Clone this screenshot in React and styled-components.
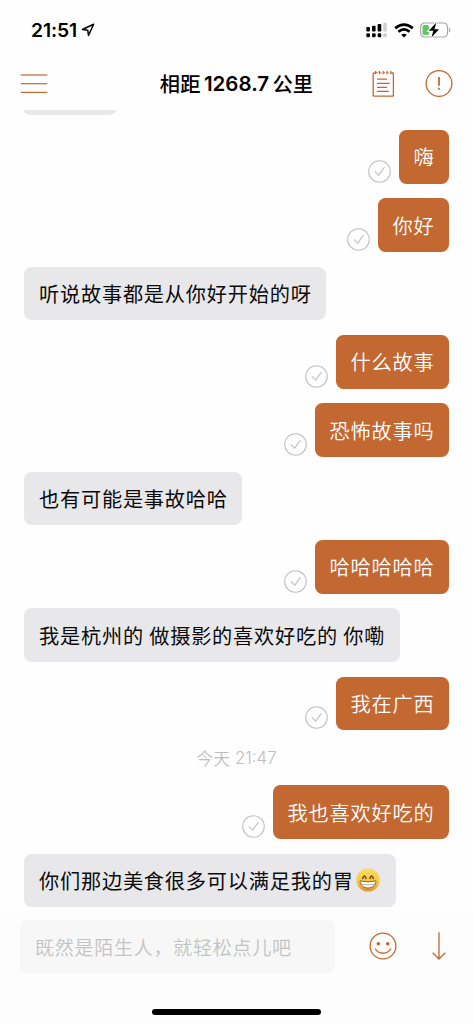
import styled, { createGlobalStyle, css } from "styled-components";

const ACCENT = "#c26830";

const GlobalStyle = createGlobalStyle`
  * {
    box-sizing: border-box;
  }
  body {
    margin: 0;
    background: #fefefe;
    font-family: Inter, "Noto Sans CJK SC", sans-serif;
  }
`;

const Screen = styled.div`
  width: 473px;
  height: 1024px;
  display: flex;
  flex-direction: column;
  overflow: hidden;
  background: #fefefe;
`;

const StatusBar = styled.div`
  height: 60px;
  flex: none;
  display: flex;
  align-items: center;
  justify-content: space-between;
  padding: 0 22px 0 31px;
`;

const Clock = styled.div`
  display: flex;
  align-items: center;
  gap: 4px;
  font-size: 19.3px;
  font-weight: 600;
  letter-spacing: -0.1px;
  color: #000;
`;

const StatusIcons = styled.div`
  display: flex;
  align-items: center;
  gap: 6.5px;
`;

const Header = styled.div`
  height: 50px;
  flex: none;
  display: grid;
  grid-template-columns: 110px 1fr 110px;
  align-items: center;
  padding: 0 20px;
`;

const Title = styled.div`
  display: flex;
  align-items: center;
  justify-content: center;
  gap: 3.5px;
  height: 30px;
  margin-top: -4px;
  font-family: "Noto Sans CJK SC", sans-serif;
  font-size: 20.3px;
  font-weight: 500;
  white-space: nowrap;
  color: #000;
`;

const Distance = styled.span`
  font-family: Inter, sans-serif;
  font-size: 20.5px;
  font-weight: 600;
`;

const HeaderActions = styled.div`
  display: flex;
  justify-content: flex-end;
  gap: 30px;
  margin-top: -3px;
`;

const MenuButton = styled.div`
  display: flex;
  margin-top: -3px;
`;

const Messages = styled.div`
  flex: 1;
  min-height: 0;
  display: flex;
  flex-direction: column;
  gap: 14.75px;
  padding: 0 24.3px 0 24.2px;
  overflow: hidden;
`;

const Row = styled.div`
  flex: none;
  display: flex;
  align-items: flex-end;
  justify-content: ${(p) => (p.$mine ? "flex-end" : "flex-start")};
  gap: 7.5px;
`;

const Bubble = styled.div`
  height: 53.6px;
  display: flex;
  align-items: center;
  padding: 0 14.3px 0 14.8px;
  border-radius: 7.5px;
  font-family: "Noto Sans CJK SC", sans-serif;
  font-size: 20.2px;
  letter-spacing: 0.79px;
  white-space: pre;
  ${(p) =>
    p.$mine
      ? css`
          background: ${ACCENT};
          color: #fff;
          font-weight: 350;
        `
      : css`
          background: #e8e8ea;
          color: #0a0a0a;
          font-weight: 400;
        `}
`;

// bottom edge of the message scrolled under the header
const ScrolledBubble = styled.div`
  flex: none;
  width: 92px;
  height: 5.2px;
  border-radius: 0 0 7.5px 7.5px / 0 0 5.2px 5.2px;
  background: #e8e8ea;
`;

const Time = styled.div`
  flex: none;
  height: 25.5px;
  display: flex;
  align-items: center;
  justify-content: center;
  gap: 5px;
  padding-top: 1px;
  font-size: 16.8px;
  font-weight: 350;
  color: #bdbdbd;
`;

const Footer = styled.div`
  height: 114px;
  flex: none;
  display: flex;
  flex-direction: column;
  justify-content: space-between;
  padding: 10px 20px 9.5px;
  background: #fdfdfd;
`;

const Composer = styled.div`
  display: flex;
  align-items: center;
`;

const Input = styled.div`
  width: 315px;
  height: 53px;
  display: flex;
  align-items: center;
  padding: 0 15px 1px;
  border-radius: 7px;
  background: #f7f7f7;
  font-family: "Noto Sans CJK SC", sans-serif;
  font-size: 19px;
  font-weight: 350;
  letter-spacing: 0.75px;
  white-space: nowrap;
  color: #c3c3c3;
`;

const ComposerActions = styled.div`
  flex: 1;
  display: flex;
  align-items: center;
  justify-content: space-between;
  padding: 0 7px 2px 34px;
`;

const HomeIndicator = styled.div`
  width: 169px;
  height: 6px;
  align-self: center;
  border-radius: 3px;
  background: #000;
`;

const Emoji = styled.svg`
  flex: none;
  margin: 0 1.6px 0 2.5px;
`;

const ReadMark = styled.svg`
  flex: none;
  margin-bottom: 0.8px;
`;

function LocationIcon() {
  return (
    <svg width="14" height="14" viewBox="0 0 14 14" fill="none" stroke="#000" strokeWidth="1.5" strokeLinejoin="round">
      <path d="M12.6 1.2 1.4 6.5 6.8 7.3 7.5 12.5Z" />
    </svg>
  );
}

function SignalIcon() {
  return (
    <svg width="21" height="16" viewBox="0 0 21 16">
      <rect x="0.3" y="5" width="3.6" height="4.5" rx="1" />
      <rect x="6" y="3.8" width="3.6" height="5.7" rx="1" />
      <rect x="11.6" y="2" width="3.7" height="7.5" rx="1" />
      <rect x="17.2" y="0.7" width="3.6" height="8.8" rx="1" fill="#cfcfcf" />
      <rect x="0.3" y="11.3" width="3.7" height="4" rx="1.4" />
      <rect x="6" y="11.3" width="3.7" height="4" rx="1.4" />
      <rect x="11.6" y="11.3" width="3.7" height="4" rx="1.4" />
      <rect x="17.2" y="11.3" width="3.6" height="4" rx="1.4" fill="#cfcfcf" />
    </svg>
  );
}

function WifiIcon() {
  return (
    <svg width="20" height="15" viewBox="0 0 20 15" fill="none" stroke="#000" strokeWidth="2.7">
      <path d="M1.2 5.3Q10-2.2 18.8 5.3" />
      <path d="M4.4 8.8Q10 4 15.6 8.8" />
      <path d="M10 14.4 7.2 11.7Q10 9.6 12.8 11.7Z" fill="#000" stroke="none" />
    </svg>
  );
}

function BatteryIcon() {
  return (
    <svg width="31" height="16" viewBox="0 0 31 16">
      <rect x="0.6" y="1" width="27" height="14" rx="4.2" fill="#fff" stroke="#a5a5a5" strokeWidth="1.2" />
      <path d="M29.2 5.7c1.7.6 1.7 4 0 4.6Z" fill="#a5a5a5" />
      <rect x="2.5" y="3" width="6.5" height="10" rx="1.8" fill="#65c466" />
      <path
        d="M16.3.6 8.8 8.8h4.5L11.5 15.4 19 7.2h-4.5Z"
        stroke="#fefefe"
        strokeWidth="2.2"
        paintOrder="stroke"
      />
    </svg>
  );
}

function MenuIcon() {
  return (
    <svg width="28" height="20" viewBox="0 0 28 20" stroke={ACCENT}>
      <path d="M0.8 1H27.3" strokeWidth="1.2" />
      <path d="M0.8 9.7H27.3" strokeWidth="1.2" />
      <path d="M0.8 18.4H27.3" strokeWidth="1.2" />
    </svg>
  );
}

function NotesIcon() {
  return (
    <svg width="23" height="28" viewBox="0 0 23 28" fill="none" stroke={ACCENT} strokeWidth="1.3">
      <path d="M3 3H1.9Q1.2 3 1.2 3.8V25.4Q1.2 26.2 2 26.2H20.6Q21.4 26.2 21.4 25.4V3.8Q21.4 3 20.7 3H19.5" />
      <path d="M4 2.8h1.8M7.6 2.8h1.8M11.2 2.8H13M14.8 2.8h1.8M18.4 2.8h1" strokeWidth="1.1" />
      <path d="M3.6.9v3.4M7.4.9v3.4M11.2.9v3.4M15 .9v3.4M18.8.9v3.4" strokeWidth="1.2" />
      <path d="M5 9.2H15M5 13.3H17.8M5 17.4H15M5 21.4H16.8" />
    </svg>
  );
}

function AlertIcon() {
  return (
    <svg width="28" height="28" viewBox="0 0 28 28" fill="none" stroke={ACCENT} strokeWidth="1.3">
      <circle cx="14" cy="13.5" r="12.9" />
      <path d="M14 7.1V15.7M14 17.7V19.7" strokeWidth="1.8" />
    </svg>
  );
}

function ReadIcon() {
  return (
    <ReadMark width="23" height="23" viewBox="0 0 23 23" fill="none" stroke="#c2c2c2">
      <circle cx="11.5" cy="11.5" r="10.8" strokeWidth="1.1" />
      <path d="M6.8 11.3 10.8 15.1 16.4 7.1" strokeWidth="1.1" />
    </ReadMark>
  );
}

function SmileIcon() {
  return (
    <svg width="28" height="28" viewBox="0 0 28 28" fill="none" stroke={ACCENT} strokeWidth="1.3">
      <circle cx="14" cy="14" r="12.9" />
      <path d="M6.2 16.5C9.2 22.8 18.8 22.8 21.8 16.5" />
      <circle cx="9.4" cy="11.7" r="1.8" fill={ACCENT} stroke="none" />
      <circle cx="18.7" cy="11.7" r="1.8" fill={ACCENT} stroke="none" />
    </svg>
  );
}

function ArrowDownIcon() {
  return (
    <svg width="14" height="28" viewBox="0 0 14 28" fill="none" stroke={ACCENT} strokeWidth="1.3">
      <path d="M7 0.2V27M0.7 20.8 7 27 13.3 20.8" />
    </svg>
  );
}

function GrinEmoji() {
  return (
    <Emoji width="24" height="24" viewBox="0 0 24 24" fill="none">
      <defs>
        <linearGradient id="face" x1="0" y1="0" x2="0" y2="1">
          <stop offset="0" stopColor="#fbdc62" />
          <stop offset="0.6" stopColor="#f9c83f" />
          <stop offset="1" stopColor="#e08e2b" />
        </linearGradient>
      </defs>
      <circle cx="12" cy="12" r="11.6" fill="url(#face)" />
      <path d="M6.7 10.4Q8.4 5.8 10.1 10.4M13.9 10.4Q15.6 5.8 17.3 10.4" stroke="#6b431a" strokeWidth="1.5" strokeLinecap="round" />
      <path d="M4 13Q12 14.5 20 13C19.6 22.3 4.4 22.3 4 13Z" fill="#fff" stroke="#7b5526" strokeWidth="0.9" />
      <path d="M4.8 16.2Q12 17.8 19.2 16.2" stroke="#a49a8c" strokeWidth="0.8" />
    </Emoji>
  );
}

const messages = [
  { mine: true, text: "嗨" },
  { mine: true, text: "你好" },
  { text: "听说故事都是从你好开始的呀" },
  { mine: true, text: "什么故事" },
  { mine: true, text: "恐怖故事吗" },
  { text: "也有可能是事故哈哈" },
  { mine: true, text: "哈哈哈哈哈" },
  { text: "我是杭州的 做摄影的喜欢好吃的 你嘞" },
  { mine: true, text: "我在广西" },
  { time: "21:47" },
  { mine: true, text: "我也喜欢好吃的" },
  { text: "你们那边美食很多可以满足我的胃", emoji: true },
];

function Message({ item }) {
  if (item.time) {
    return (
      <Time>
        <span>今天</span>
        <span>{item.time}</span>
      </Time>
    );
  }
  return (
    <Row $mine={item.mine}>
      {item.mine && <ReadIcon />}
      <Bubble $mine={item.mine}>
        {item.text}
        {item.emoji && <GrinEmoji />}
      </Bubble>
    </Row>
  );
}

function App() {
  return (
    <>
      <GlobalStyle />
      <Screen>
        <StatusBar>
          <Clock>
            21:51
            <LocationIcon />
          </Clock>
          <StatusIcons>
            <SignalIcon />
            <WifiIcon />
            <BatteryIcon />
          </StatusIcons>
        </StatusBar>
        <Header>
          <MenuButton>
            <MenuIcon />
          </MenuButton>
          <Title>
            <span>相距</span>
            <Distance>1268.7</Distance>
            <span>公里</span>
          </Title>
          <HeaderActions>
            <NotesIcon />
            <AlertIcon />
          </HeaderActions>
        </Header>
        <Messages>
          <ScrolledBubble />
          {messages.map((item, i) => (
            <Message key={i} item={item} />
          ))}
        </Messages>
        <Footer>
          <Composer>
            <Input>既然是陌生人，就轻松点儿吧</Input>
            <ComposerActions>
              <SmileIcon />
              <ArrowDownIcon />
            </ComposerActions>
          </Composer>
          <HomeIndicator />
        </Footer>
      </Screen>
    </>
  );
}

export default App;
